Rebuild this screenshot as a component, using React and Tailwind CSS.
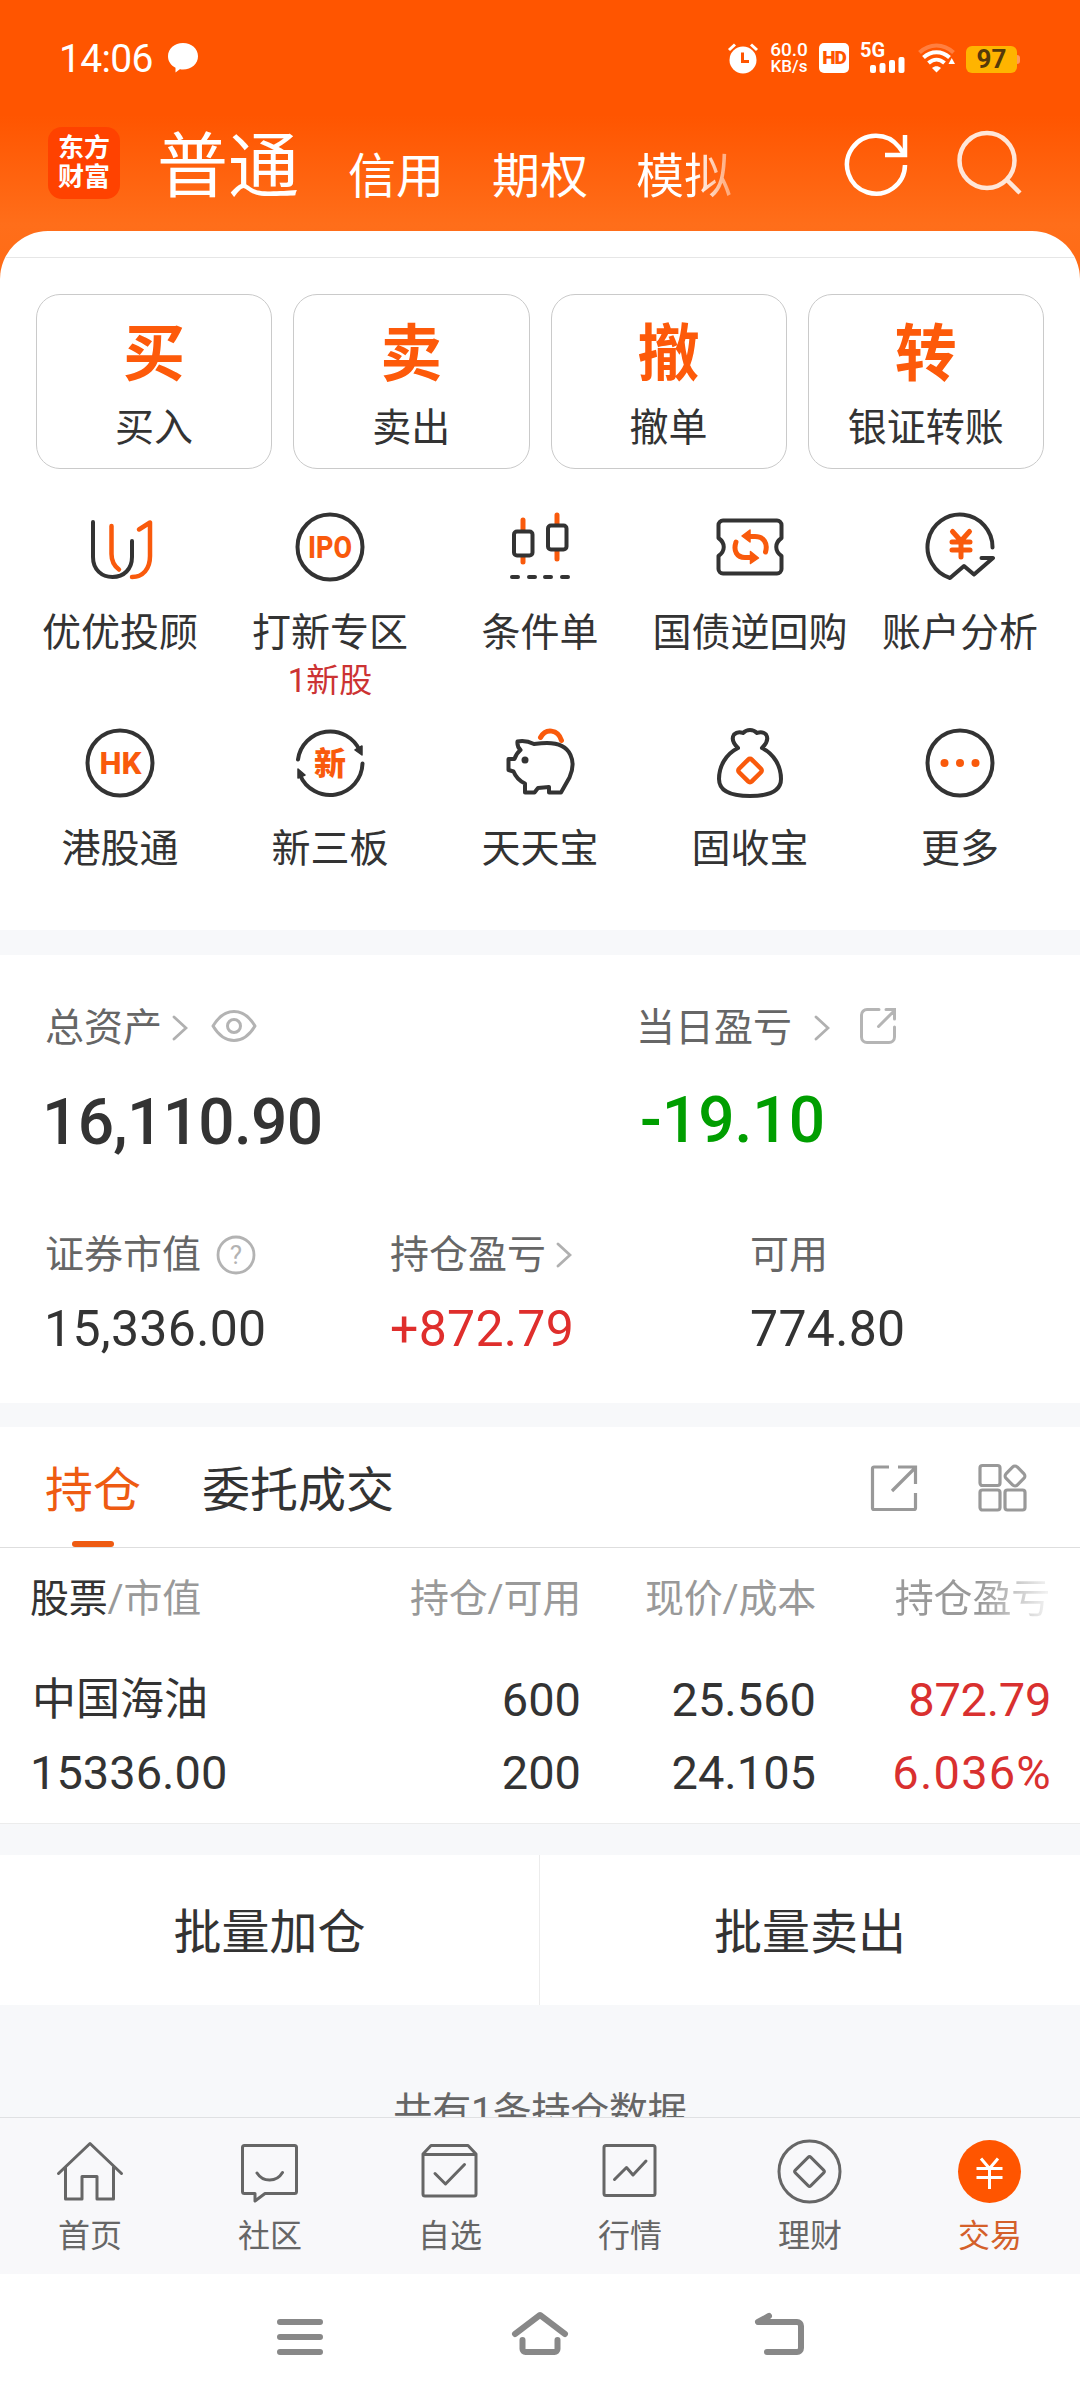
import React, { useState } from 'react';

const DARK = '#333333';
const ORANGE = '#f95a0c';

const Icon = ({ children, stroke = DARK, width = 4, size = 70 }) => (
    <svg
        width={size}
        height={size}
        viewBox={`0 0 ${size} ${size}`}
        fill="none"
        stroke={stroke}
        strokeWidth={width}
        strokeLinecap="round"
        strokeLinejoin="round"
        className="shrink-0"
    >
        {children}
    </svg>
);

const Chevron = ({ className = '' }) => (
    <svg width="16" height="26" viewBox="0 0 16 26" fill="none" stroke="#b0b0b0" strokeWidth="2.8" strokeLinecap="round" className={`shrink-0 ${className}`}>
        <path d="M2 2l12 11L2 24" />
    </svg>
);

const actions = [
    { glyph: '买', label: '买入' },
    { glyph: '卖', label: '卖出' },
    { glyph: '撤', label: '撤单' },
    { glyph: '转', label: '银证转账' },
];

const shortcuts = [
    {
        label: '优优投顾',
        icon: (
            <Icon>
                <path d="M8 10v35c0 13 9 20 19.500 20C39 65 47 57 47 45V29" />
                <path stroke={ORANGE} strokeWidth="4.500" d="M26.500 14v28c0 7 2 11.500 7.500 15.500M54 17.500l11-7V44c0 13-7 21-18 21" />
            </Icon>
        ),
    },
    {
        label: '打新专区',
        note: '1新股',
        icon: (
            <Icon>
                <circle cx="35" cy="35" r="32.500" />
                <text x="35" y="46" textAnchor="middle" textLength="44" lengthAdjust="spacingAndGlyphs" fontSize="31" fontWeight="800" fill={ORANGE} stroke="none">IPO</text>
            </Icon>
        ),
    },
    {
        label: '条件单',
        icon: (
            <Icon>
                <path stroke={ORANGE} strokeWidth="5" d="M18 8v42M52 3v44" />
                <rect x="9" y="19.500" width="18.500" height="24" rx="3" fill="#fff" />
                <rect x="43" y="13.500" width="18.500" height="24" rx="3" fill="#fff" />
                <path d="M7 65h6M24 65h6M40 65h6M57 65h6" />
            </Icon>
        ),
    },
    {
        label: '国债逆回购',
        icon: (
            <Icon>
                <path d="M8 8.500h54a4.500 4.500 0 0 1 4.500 4.500v13c-7 5-7 13 0 18v13a4.500 4.500 0 0 1-4.500 4.500H8A4.500 4.500 0 0 1 3.500 57V44c7-5 7-13 0-18V13A4.500 4.500 0 0 1 8 8.500z" />
                <path stroke={ORANGE} strokeWidth="5" d="M21 30c-3 9 1 15.500 9 15.500h6M34 24.500h6c9 0 13 7 10.500 15.500" />
                <path fill={ORANGE} stroke={ORANGE} strokeWidth="1.500" d="M27 24l8-6v12zM43.500 46l-8 5.500v-12z" />
            </Icon>
        ),
    },
    {
        label: '账户分析',
        icon: (
            <Icon>
                <path d="M67.500 35.500A32.500 32.500 0 1 0 25 66l14-12 10 8.500 19-16.500H56.500" />
                <path stroke={ORANGE} strokeWidth="5" d="M27.500 19.500L36 29l8.500-9.500M36 29v16M27 30h18M27 38h18" />
            </Icon>
        ),
    },
    {
        label: '港股通',
        icon: (
            <Icon>
                <circle cx="35" cy="35" r="32.500" />
                <text x="35.500" y="46" textAnchor="middle" textLength="42" lengthAdjust="spacingAndGlyphs" fontSize="31" fontWeight="800" fill={ORANGE} stroke="none">HK</text>
            </Icon>
        ),
    },
    {
        label: '新三板',
        icon: (
            <Icon>
                <path d="M3 31.500A32.500 32.500 0 0 1 65 23M67.500 35.500A32.500 32.500 0 0 1 5 47" />
                <path fill={DARK} strokeWidth="1.500" d="M67 18v9l-7-5zM3 50v-9l7 6z" />
                <text x="35" y="46.500" textAnchor="middle" fontSize="32" fontWeight="900" fill={ORANGE} stroke="none">新</text>
            </Icon>
        ),
    },
    {
        label: '天天宝',
        icon: (
            <Icon>
                <path d="M12.500 13.500c-.5 4 .5 6 3 8.500-3 2.500-5 5.500-6 9H3.500v11l5 1.500c2 5 6 9.500 11.500 12v9h9.500l3.500-4.500 11-1v5.500h12l8.500-15C71 35 68 15 42 15c-5 0-9 .5-13 1-5-2.500-12-3.500-16.500-2.500z" />
                <circle cx="20" cy="32" r="3.500" fill={DARK} stroke="none" />
                <path stroke={ORANGE} strokeWidth="5" d="M35.500 9.500c5-9.500 17.500-8.500 21 3" />
            </Icon>
        ),
    },
    {
        label: '固收宝',
        icon: (
            <Icon>
                <path d="M23 20c-5-5-7-9-4-13.500 2.500-2.500 5.500-3 9-1.500 4-4 10-4 14 0 3.500-1.500 6.500-1 9 1.500 3 4.500 1 8.500-4 13.500C59 26 66 38 66 51c0 12-12 17-31 17S4 63 4 51c0-13 7-25 19-31z" />
                <rect x="26" y="33.500" width="18" height="18" rx="2.500" transform="rotate(45 35 42.500)" stroke={ORANGE} strokeWidth="4.500" />
            </Icon>
        ),
    },
    {
        label: '更多',
        icon: (
            <Icon>
                <circle cx="35" cy="35" r="32.500" />
                <g fill={ORANGE} stroke="none">
                    <circle cx="19.500" cy="35" r="4" />
                    <circle cx="35" cy="35" r="4" />
                    <circle cx="50.500" cy="35" r="4" />
                </g>
            </Icon>
        ),
    },
];

const navItems = [
    { label: '首页', icon: <path d="M3.500 37.500L35 7.500l31.500 30M10.500 31v32H27V40.500h15V63h16.500V31" /> },
    { label: '社区', icon: <path d="M9.500 9.500h50a2 2 0 0 1 2 2v44a2 2 0 0 1-2 2H30l-10 7.500v-7.500H9.500a2 2 0 0 1-2-2v-44a2 2 0 0 1 2-2zM22 37c6 9.500 19.500 9.500 25.500-.5" /> },
    { label: '自选', icon: <path d="M8 18l8-8.500h37l8 8.500v40a2 2 0 0 1-2 2H10a2 2 0 0 1-2-2zM8 18.500h53M20 37.500L30.500 48l19-19.500" /> },
    { label: '行情', icon: <path d="M11 9.500h47a2 2 0 0 1 2 2v46a2 2 0 0 1-2 2H11a2 2 0 0 1-2-2v-46a2 2 0 0 1 2-2zM19.500 43.500l12-12 6.500 7.500L51 25" /> },
    { label: '理财', icon: <><circle cx="34.500" cy="35.500" r="30.500" /><rect x="23.500" y="24.500" width="22" height="22" rx="2" transform="rotate(45 34.500 35.500)" /></> },
    { label: '交易', active: true, icon: <><circle cx="34.500" cy="35.500" r="31.500" fill="#ff5500" stroke="none" /><path stroke="#fff" strokeLinecap="butt" strokeWidth="3" d="M26 22.500l8.500 10 8.500-10M34.500 32v21M21.500 32.500h26M21.500 41.500h26" /></> },
];

const holdings = [
    { name: '中国海油', value: '15336.00', qty: '600', usable: '200', price: '25.560', cost: '24.105', profit: '872.79', rate: '6.036%' },
];

const StatusBar = () => (
    <div className="flex h-[116px] items-center pl-[59px] pr-[60px] text-white">
        <span className="mt-px text-[39px] leading-[44px] tracking-[-0.7px]">14:06</span>
        <svg width="32" height="30" viewBox="0 0 32 30" fill="#fff" className="ml-[14px] shrink-0">
            <path d="M16 0c8.500 0 15 5.800 15 13.200S24.500 26.500 16 26.500c-1.500 0-2 0-3.200-.2L8.500 29.500v-4.800C4 22.500 1 18.300 1 13.200 1 5.800 7.500 0 16 0z" />
        </svg>
        <div className="ml-auto flex items-center">
            <svg width="32" height="31" viewBox="0 0 32 31" className="shrink-0">
                <circle cx="16" cy="17" r="13.500" fill="#fff" />
                <path d="M2 7l6-5.500M30 7l-6-5.500" stroke="#fff" strokeWidth="3" />
                <path d="M15.500 9.500v9h6.500" fill="none" stroke="#ff5500" strokeWidth="3" />
            </svg>
            <div className="ml-[10px] flex w-[40px] flex-col items-center text-[19px] font-medium leading-[17px]">
                <span>60.0</span>
                <span className="text-[17px]">KB/s</span>
            </div>
            <span className="ml-[10px] flex h-[30px] w-[30px] items-center justify-center rounded-[5px] bg-white text-[19px] font-black tracking-[-1px] text-[#ff5500]">HD</span>
            <div className="relative ml-[11px] h-[32px] w-[46px]">
                <span className="absolute left-0 top-0 -mt-px text-[20px] font-bold leading-[18px]">5G</span>
                <svg width="46" height="32" viewBox="0 0 46 32" fill="#fff">
                    <rect x="10" y="23" width="6" height="8" rx="2" />
                    <rect x="19.500" y="21" width="6" height="10" rx="2" />
                    <rect x="29" y="18" width="6" height="13" rx="2" />
                    <rect x="38.500" y="15" width="6" height="16" rx="2" />
                </svg>
            </div>
            <svg width="38" height="30" viewBox="0 0 38 30" fill="none" stroke="#fff" strokeWidth="4" className="ml-[12px] shrink-0">
                <path d="M1.500 9.500c10-9.500 24-9.500 34 0" strokeOpacity=".25" />
                <path d="M5.500 14.500c7.500-7 18.500-7 26 0M10.500 20c5-4.500 11-4.500 16 0" />
                <path d="M14 25c3-2.300 6-2.300 9 0L18.500 29.500z" fill="#fff" stroke="none" />
                <path d="M30.500 21l3.200-6 3.300 6z" fill="#fff" stroke="none" />
            </svg>
            <div className="ml-[10px] mt-[2px] flex items-center">
                <span className="flex h-[27px] w-[51px] items-center justify-center rounded-[6px] bg-[#ffb400] pt-px text-[26px] font-bold text-[#55390a]">97</span>
                <span className="h-[9px] w-[3px] rounded-r bg-[#ff9a5c]" />
            </div>
        </div>
    </div>
);

const Header = () => (
    <div className="flex h-[115px] items-start pl-[48px] text-white">
        <div className="mt-[11px] flex h-[72px] w-[72px] flex-col items-center justify-center rounded-[14px] bg-[#ff4200] text-[26px] font-bold leading-[29px]">
            <span>东方</span>
            <span>财富</span>
        </div>
        <div className="flex">
            <span className="ml-[37px] mt-[7px] text-[71px] leading-[88px]">普通</span>
            <span className="ml-[49px] mt-[31px] text-[48px] leading-[60px]">信用</span>
            <span className="ml-[48px] mt-[31px] text-[48px] leading-[60px]">期权</span>
            <span className="ml-[48px] mt-[31px] bg-gradient-to-r from-white from-60% to-white/40 bg-clip-text text-[48px] leading-[60px] text-transparent">模拟</span>
        </div>
        <svg width="64" height="66" viewBox="0 0 64 66" fill="none" stroke="#fff" strokeWidth="4.500" className="ml-[112px] mt-[15px] shrink-0">
            <path d="M61 34a29 29 0 1 1-6-18l5 7" />
            <path d="M61 4v20H41" />
        </svg>
        <svg width="66" height="66" viewBox="0 0 66 66" fill="none" stroke="#ffe6d8" strokeWidth="4.500" className="ml-[48px] mt-[14px] shrink-0">
            <circle cx="31" cy="30.500" r="27.500" />
            <path d="M50 49l14 14" />
        </svg>
    </div>
);

const Assets = () => (
    <div className="h-[448px] bg-white pl-[45px] text-[#333]">
        <div className="flex h-[146px] items-center text-[39px] text-[#666]">
            <div className="flex w-[591px] items-center">
                <span>总资产</span>
                <Chevron className="ml-[10px]" />
                <svg width="46" height="34" viewBox="0 0 46 34" fill="none" stroke="#b3b3b3" strokeWidth="3" className="mb-[4px] ml-[23px]">
                    <path d="M2 17C8 7 15 2.500 23 2.500S38 7 44 17C38 27 31 31.500 23 31.500S8 27 2 17z" strokeLinejoin="round" />
                    <circle cx="23" cy="17" r="6.500" />
                </svg>
            </div>
            <span>当日盈亏</span>
            <Chevron className="ml-[22px]" />
            <svg width="38" height="38" viewBox="0 0 38 38" fill="none" stroke="#b5b5b5" strokeWidth="3" strokeLinecap="round" className="mb-[4px] ml-[29px]">
                <path d="M20 2.500H8A5.500 5.500 0 0 0 2.500 8v22A5.500 5.500 0 0 0 8 35.500h22a5.500 5.500 0 0 0 5.500-5.500V20M19.500 19.500L35 4M27 2.500h8.500V12" />
            </svg>
        </div>
        <div className="-ml-[3px] flex h-[44px] items-center text-[64px] font-medium">
            <span className="w-[598px] tracking-[-0.7px]">16,110.90</span>
            <span className="mb-[3px] text-[#009e00]">-19.10</span>
        </div>
        <div className="mt-[87px] flex h-[46px] items-center text-[39px] text-[#666]">
            <div className="flex w-[345px] items-center">
                <span>证券市值</span>
                <svg width="40" height="40" viewBox="0 0 40 40" fill="none" stroke="#b3b3b3" strokeWidth="2.800" className="ml-[15px]">
                    <circle cx="20" cy="20" r="18" />
                    <text x="20" y="29" textAnchor="middle" fontSize="26" fill="#b3b3b3" stroke="none">?</text>
                </svg>
            </div>
            <div className="flex w-[360px] items-center">
                <span>持仓盈亏</span>
                <Chevron className="ml-[10px]" />
            </div>
            <span>可用</span>
        </div>
        <div className="mt-[23px] flex h-[56px] items-center text-[50px] tracking-[0.3px]">
            <span className="-ml-px w-[346px]">15,336.00</span>
            <span className="w-[360px] text-[#df2e2c]">+872.79</span>
            <span>774.80</span>
        </div>
    </div>
);

const Holdings = () => {
    const [tab, setTab] = useState('持仓');

    return (
        <div className="bg-white text-[#333]">
            <div className="flex h-[121px] items-stretch border-b border-[#dedede] pl-[45px] pr-[52px]">
                {['持仓', '委托成交'].map((t) => (
                    <button key={t} onClick={() => setTab(t)} className={`mr-[61px] flex flex-col items-center text-[48px] leading-[60px] ${tab === t ? 'text-[#ee5b12]' : ''}`}>
                        <span className="mt-[34px]">{t}</span>
                        {tab === t && <span className="mt-auto h-[6px] w-[42px] rounded-full bg-[#ee5b12]" />}
                    </button>
                ))}
                <div className="ml-auto flex items-center pt-px">
                    <svg width="48" height="48" viewBox="0 0 48 48" fill="none" stroke="#999" strokeWidth="3.200" className="mr-[60px]">
                        <path d="M19 3H4a1.500 1.500 0 0 0-1.500 1.500V44A1.500 1.500 0 0 0 4 45.500h40a1.500 1.500 0 0 0 1.500-1.500V29M22 27L45 4M28 3h17.500v17" />
                    </svg>
                    <svg width="50" height="50" viewBox="0 0 50 50" fill="none" stroke="#999" strokeWidth="3.200">
                        <rect x="2" y="2.500" width="20" height="20" rx="2.500" />
                        <rect x="2" y="27" width="20" height="20" rx="2.500" />
                        <rect x="27" y="27" width="20" height="20" rx="2.500" />
                        <rect x="29" y="5" width="16" height="16" rx="3.500" transform="rotate(45 37 13)" />
                    </svg>
                </div>
            </div>
            <div className="grid h-[102px] grid-cols-[300px_251px_235px_234px] items-center pl-[30px] text-right text-[39px] tracking-[-0.2px] text-[#999]">
                <span className="text-left"><span className="text-[#333]">股票</span>/市值</span>
                <span>持仓/可用</span>
                <span>现价/成本</span>
                <span><span className="bg-gradient-to-r from-[#999] from-55% to-[#999]/10 bg-clip-text text-transparent">持仓盈亏</span></span>
            </div>
            {holdings.map((h) => (
                <div key={h.name} className="grid h-[174px] grid-cols-[300px_251px_235px_235px] border-b border-[#ececec] pl-[30px] pt-[13px] text-right text-[47px] leading-[73px]">
                    <div className="flex flex-col text-left"><span className="pl-[2px] pt-[2px] text-[44px] leading-[71px]">{h.name}</span><span>{h.value}</span></div>
                    <div className="flex flex-col"><span>{h.qty}</span><span>{h.usable}</span></div>
                    <div className="flex flex-col"><span>{h.price}</span><span>{h.cost}</span></div>
                    <div className="flex flex-col text-[#d9302f]"><span className="tracking-[-0.3px]">{h.profit}</span><span className="-mr-px tracking-[1.2px]">{h.rate}</span></div>
                </div>
            ))}
        </div>
    );
};

const App = () => (
    <div className="flex h-[2400px] w-[1080px] flex-col overflow-hidden bg-[#f7f8fa] font-['Roboto','Noto_Sans_CJK_SC',sans-serif] leading-[1.2]">
        <div className="bg-[linear-gradient(#ff5500_0px,#ff5500_115px,#ff6e1a_225px,#ff6a14_290px)]">
            <StatusBar />
            <Header />
            <div className="h-[699px] overflow-hidden rounded-t-[48px] bg-white pt-[26px] text-[#333]">
                <div className="h-px bg-[#e6e6e6]" />
                <div className="mt-[36px] grid grid-cols-4 gap-[21px] pl-[36px] pr-[36px]">
                    {actions.map((a) => (
                        <div key={a.label} className="flex h-[175px] flex-col items-center rounded-[24px] border border-[#cacaca]">
                            <span className="mt-[20px] text-[62px] font-bold leading-[80px] text-[#fd5a0a]">{a.glyph}</span>
                            <span className="mt-[10px] text-[39px] leading-[46px]">{a.label}</span>
                        </div>
                    ))}
                </div>
                <div className="mt-[43px] grid grid-cols-5 px-[15px]">
                    {shortcuts.map((s) => (
                        <div key={s.label} className="flex h-[216px] flex-col items-center">
                            {s.icon}
                            <span className="mt-[27px] whitespace-nowrap text-[39px] leading-[48px]">{s.label}</span>
                            {s.note && <span className="mt-[4px] text-[33px] leading-[40px] text-[#cc3333]">{s.note}</span>}
                        </div>
                    ))}
                </div>
            </div>
        </div>

        <div className="mt-[25px]">
            <Assets />
        </div>
        <div className="mt-[24px]">
            <Holdings />
        </div>

        {/* Batch buttons */}
        <div className="mt-[31px] grid h-[150px] shrink-0 grid-cols-2 bg-white text-[48px] text-[#333]">
            <button className="border-r border-[#ececec] pt-[6px]">批量加仓</button>
            <button className="pt-[6px]">批量卖出</button>
        </div>
        <div className="flex h-[112px] shrink-0 justify-center overflow-hidden pt-[83px] text-[39px] leading-[48px] tracking-[-0.2px] text-[#666]">
            共有1条持仓数据
        </div>

        {/* Tab bar */}
        <div className="grid h-[157px] shrink-0 grid-cols-6 border-t border-[#e0e1e3] bg-[#f8f8fa]">
            {navItems.map((n) => (
                <div key={n.label} className={`flex flex-col items-center pt-[18px] text-[32px] leading-[40px] ${n.active ? 'text-[#d4602a]' : 'text-[#666]'}`}>
                    <Icon stroke="#666666" width={3}>{n.icon}</Icon>
                    <span className="mt-[10px]">{n.label}</span>
                </div>
            ))}
        </div>

        {/* System navigation */}
        <div className="flex flex-1 items-start justify-center gap-[181px] bg-white pt-[34px]">
            <svg width="60" height="52" viewBox="0 0 60 52" stroke="#888" strokeWidth="6" strokeLinecap="round">
                <path d="M11 14h40M11 29h40M11 44h40" />
            </svg>
            <svg width="60" height="52" viewBox="0 0 60 52" fill="none" stroke="#888" strokeWidth="6" strokeLinecap="round" strokeLinejoin="round">
                <path d="M5 26L30 7l25 19M12.500 32v9a3 3 0 0 0 3 3h29a3 3 0 0 0 3-3v-9" />
            </svg>
            <svg width="60" height="52" viewBox="0 0 60 52" fill="none" stroke="#888" strokeWidth="6" strokeLinecap="round" strokeLinejoin="round">
                <path d="M18 8L7 14h39a4 4 0 0 1 4 4v22a4 4 0 0 1-4 4H16" />
            </svg>
        </div>
    </div>
);

export default App;
